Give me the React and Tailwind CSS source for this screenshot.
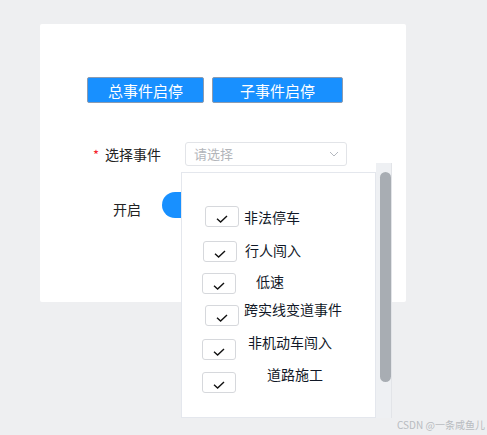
import React from 'react';

const events = [
  { name: '非法停车', top: 'mt-[33px]', box: 'ml-[23px]', text: 'ml-[5px] mt-[1px]' },
  { name: '行人闯入', top: 'mt-[13px]', box: 'ml-[21px]', text: 'ml-[8px] -mt-[1px]' },
  { name: '低速', top: 'mt-[11px]', box: 'ml-[20px]', text: 'ml-[20px] -mt-[2px]' },
  { name: '跨实线变道事件', top: 'mt-[11px]', box: 'ml-[23px]', text: 'ml-[5px] -mt-[6px]' },
  { name: '非机动车闯入', top: 'mt-[13px]', box: 'ml-[20px]', text: 'ml-[12px] -mt-[7px]' },
  { name: '道路施工', top: 'mt-[12px]', box: 'ml-[20px]', text: 'ml-[31px] -mt-[8px]' },
];

const Check = () => (
  <svg width="12" height="8" viewBox="0 0 12 8" className="mt-[8px]">
    <path d="M1 3.8 L4.6 7 L11 1" fill="none" stroke="#111" strokeWidth="1.4" />
  </svg>
);

const Chevron = () => (
  <svg width="10" height="6" viewBox="0 0 10 6">
    <path d="M1 1 L5 5 L9 1" fill="none" stroke="#b4b8bf" strokeWidth="1" />
  </svg>
);

export default function App() {
  return (
    <div
      className="relative w-[487px] h-[435px] overflow-hidden bg-[#eeeff1]"
      style={{ fontFamily: '"Noto Sans CJK SC", "Liberation Sans", sans-serif' }}
    >
      {/* card */}
      <div className="ml-[40px] pt-[24px]">
        <div className="w-[366px] h-[278px] bg-white rounded-[2px] pt-[53px] pl-[47px]">
          <div className="flex gap-[8px]">
            <button className="w-[117px] h-[26px] bg-[#1890ff] border border-[#8c9bb0] rounded-[2px] text-white text-[15px] leading-none">
              总事件启停
            </button>
            <button className="w-[131px] h-[26px] bg-[#1890ff] border border-[#8c9bb0] rounded-[2px] text-white text-[15px] leading-none">
              子事件启停
            </button>
          </div>

          {/* select row */}
          <div className="mt-[39px] flex items-center h-[24px]">
            <span className="ml-[6px] text-[#f5222d] text-[13px] leading-none">*</span>
            <span className="ml-[6px] text-[14px] text-[#222]">选择事件</span>
            <div className="ml-[24px] w-[162px] h-[24px] border border-[#e2e4e8] rounded-[3px] flex items-center justify-between pl-[8px] pr-[7px]">
              <span className="text-[13px] text-[#b2b5ba]">请选择</span>
              <Chevron />
            </div>
          </div>

          {/* switch row */}
          <div className="mt-[26px] flex items-center h-[26px]">
            <span className="ml-[26px] text-[14px] text-[#222] mt-[8px]">开启</span>
            <div className="ml-[21px] w-[44px] h-[26px] rounded-full bg-[#1890ff]" />
          </div>
        </div>
      </div>

      {/* dropdown */}
      <div className="absolute left-[181px] top-[163px] flex">
        <div className="mt-[9px] w-[195px] h-[246px] bg-white border border-[#e4e7ed] flex flex-col">
          {events.map((e) => (
            <div key={e.name} className={`flex items-start ${e.top}`}>
              <div className={`${e.box} w-[34px] h-[21px] shrink-0 border border-[#d6d8dc] rounded-[3px] bg-white flex justify-center`}>
                <Check />
              </div>
              <span className={`${e.text} text-[14px] leading-[21px] text-[#111827] whitespace-nowrap`}>{e.name}</span>
            </div>
          ))}
        </div>
        <div className="w-[16px] h-[255px] bg-[#eef0f3] border-r border-[#e2e4e8] pt-[9px] pl-[4px]">
          <div className="w-[11px] h-[210px] rounded-full bg-[#a8adb3]" />
        </div>
      </div>

      {/* watermark */}
      <div className="absolute left-[397px] top-[417px] text-[10px] text-[#b8bbc0] whitespace-nowrap">
        CSDN @一条咸鱼儿
      </div>
    </div>
  );
}
